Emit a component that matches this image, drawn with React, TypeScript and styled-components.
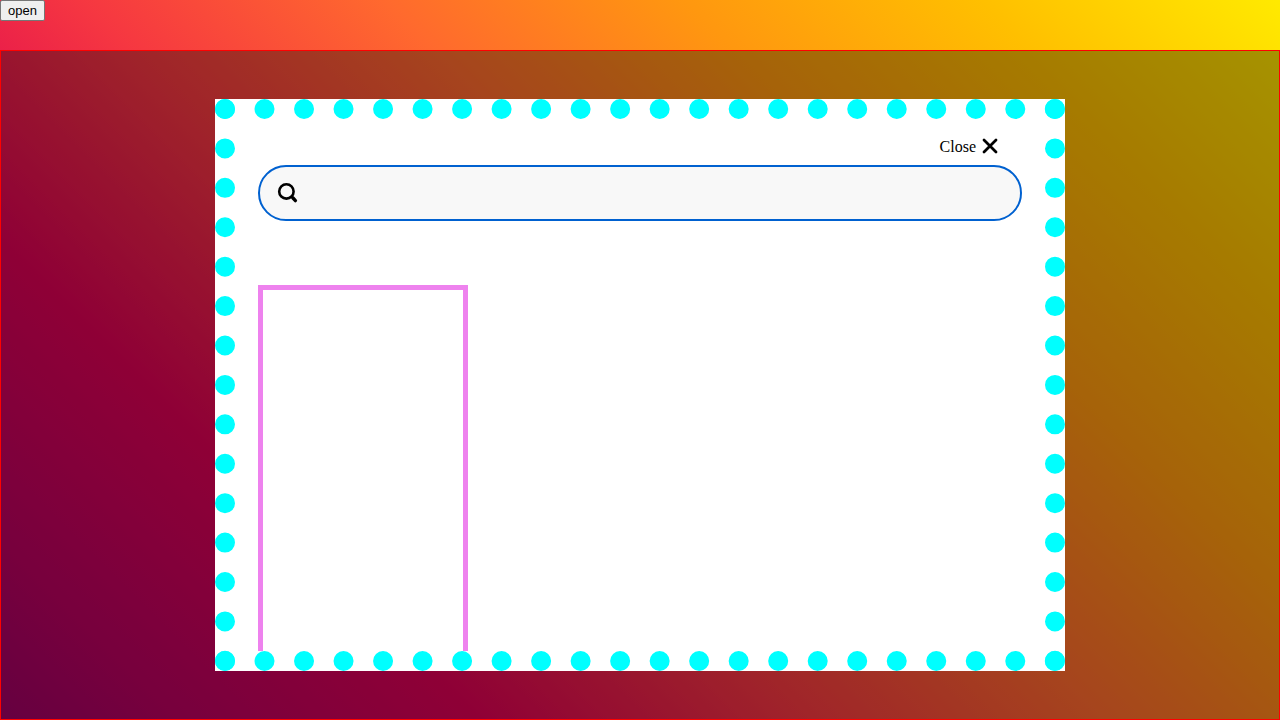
import React, { useState } from "react";
import styled, { createGlobalStyle } from "styled-components";

const GlobalStyle = createGlobalStyle`
  *, *::before, *::after {
    box-sizing: border-box;
  }

  body {
    margin: 0;
    font-family: "Liberation Serif", "Times New Roman", serif;
    font-size: 16px;
    color: #000;
  }
`;

const Page = styled.div`
  display: grid;
  grid-template-rows: 50px minmax(0, 1fr);
  height: 100vh;
  overflow: hidden;
  background-image: linear-gradient(
    45deg,
    hsl(240deg 100% 20%) 0%,
    hsl(289deg 100% 21%) 11%,
    hsl(315deg 100% 27%) 22%,
    hsl(329deg 100% 36%) 33%,
    hsl(337deg 100% 43%) 44%,
    hsl(357deg 91% 59%) 56%,
    hsl(17deg 100% 59%) 67%,
    hsl(34deg 100% 53%) 78%,
    hsl(45deg 100% 50%) 89%,
    hsl(55deg 100% 50%) 100%
  );
  background-size: 100% 200vh;
  background-repeat: no-repeat;
`;

const Toolbar = styled.header`
  display: flex;
  align-items: flex-start;
`;

const OpenButton = styled.button`
  height: 21px;
  padding: 0 7px;
  border: 1px solid #767676;
  border-radius: 2px;
  background: #efefef;
  color: #000;
  font-family: "Liberation Sans", Arial, sans-serif;
  font-size: 13px;
`;

const Backdrop = styled.div`
  display: flex;
  align-items: center;
  justify-content: center;
  padding: 48px 16px;
  border: 1px solid red;
  background: rgba(0, 0, 0, 0.35);
`;

const Dialog = styled.section`
  display: flex;
  flex-direction: column;
  width: 850px;
  max-width: 100%;
  height: 100%;
  padding: 16px 23px 0;
  overflow: hidden;
  border: 20px dotted cyan;
  background: #fff;
`;

const DialogHeader = styled.div`
  display: flex;
  flex: none;
  justify-content: flex-end;
  padding: 0 20px 6px 0;
`;

const CloseButton = styled.button`
  display: flex;
  align-items: center;
  gap: 2px;
  height: 24px;
  padding: 0;
  border: 0;
  background: none;
  color: inherit;
  font: inherit;
  cursor: pointer;
`;

const Icon = styled.svg`
  display: block;
  flex: none;
  width: 24px;
  height: 24px;
`;

const SearchField = styled.label`
  display: flex;
  flex: none;
  align-items: center;
  gap: 12px;
  height: 56px;
  padding: 0 16px;
  border: 2px solid #0061d0;
  border-radius: 28px;
  background: #f8f8f8;
`;

const SearchInput = styled.input`
  flex: 1;
  min-width: 0;
  padding: 0;
  border: 0;
  outline: 0;
  background: transparent;
  font: inherit;
`;

const Results = styled.div`
  flex: none;
  width: 210px;
  height: 1000px;
  margin-top: 64px;
  border: 5px solid violet;
`;

export default function App() {
  const [open, setOpen] = useState(true);

  return (
    <>
      <GlobalStyle />
      <Page>
        <Toolbar>
          <OpenButton type="button" onClick={() => setOpen(true)}>
            open
          </OpenButton>
        </Toolbar>
        {open && (
          <Backdrop>
            <Dialog role="dialog" aria-label="Search">
              <DialogHeader>
                <CloseButton type="button" onClick={() => setOpen(false)}>
                  Close
                  <Icon viewBox="0 0 24 24" aria-hidden="true">
                    <path
                      d="M6 5 18 17M18 5 6 17"
                      fill="none"
                      stroke="#000"
                      strokeWidth="2.8"
                      strokeLinecap="round"
                    />
                  </Icon>
                </CloseButton>
              </DialogHeader>
              <SearchField>
                <Icon viewBox="0 0 24 24" aria-hidden="true">
                  <circle cx="10.4" cy="10.4" r="7.2" fill="none" stroke="#000" strokeWidth="2.6" />
                  <path
                    d="M15.2 15.2 17 17"
                    fill="none"
                    stroke="#000"
                    strokeWidth="2.6"
                  />
                  <path
                    d="M17 17 19.4 19.6"
                    fill="none"
                    stroke="#000"
                    strokeWidth="3.4"
                    strokeLinecap="round"
                  />
                </Icon>
                <SearchInput type="text" aria-label="Search" />
              </SearchField>
              <Results />
            </Dialog>
          </Backdrop>
        )}
      </Page>
    </>
  );
}
